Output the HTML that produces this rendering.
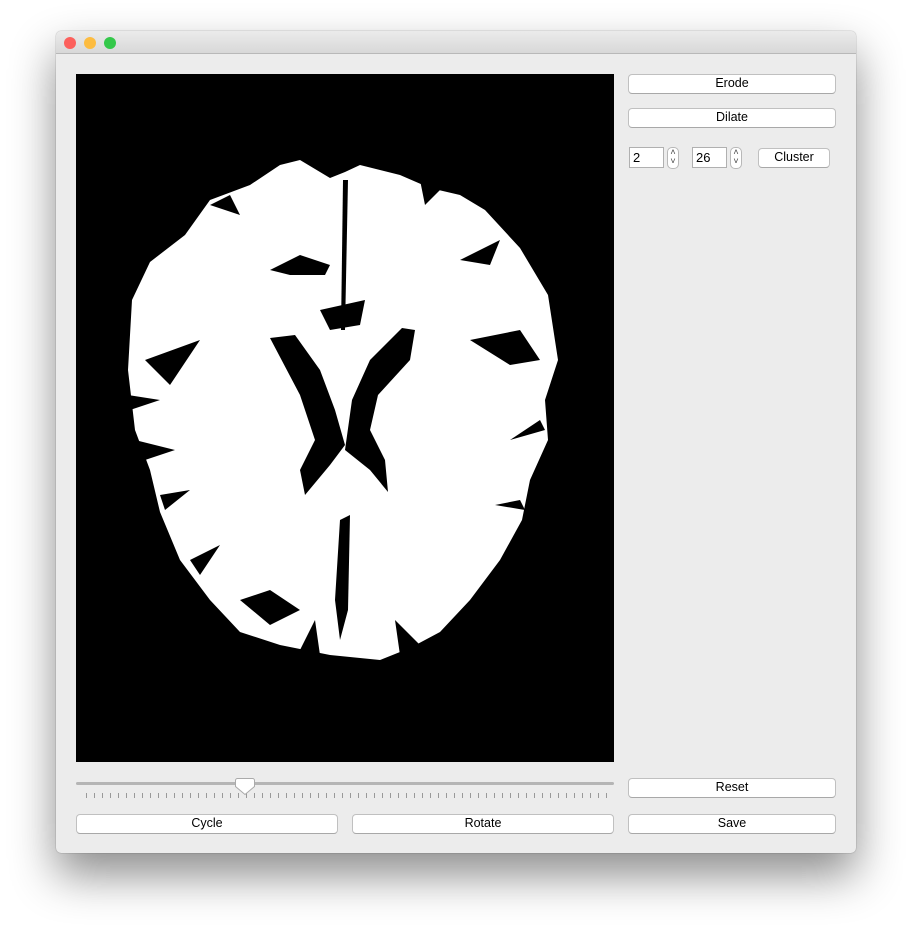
<!DOCTYPE html>
<html><head><style>
body{margin:0;width:912px;height:934px;background:#fff;font-family:"Liberation Sans",sans-serif;position:relative;overflow:hidden}
.win{position:absolute;left:56px;top:31px;width:800px;height:822px;background:#ececec;border-radius:5px;box-shadow:0 22px 45px rgba(0,0,0,.45),0 0 1px rgba(0,0,0,.5);overflow:hidden}
.tb{height:22px;background:linear-gradient(#ebebeb,#d8d8d8);border-bottom:1px solid #b8b8b8}
.dot{position:absolute;top:6px;width:12px;height:12px;border-radius:50%}
.btn{position:absolute;height:20px;background:#fff;border:1px solid #c0c0c0;border-bottom-color:#a8a8a8;border-radius:4px;font-size:12.5px;text-align:center;color:#000;box-sizing:border-box;line-height:16px}
.inp{position:absolute;height:21px;background:#fff;border:1px solid #b0b0b0;box-sizing:border-box;font-size:13px;padding-left:3px;line-height:19px}
.spin{position:absolute;width:12px;height:22px;background:#fff;border:1px solid #b8b8b8;border-radius:5px;box-sizing:border-box;font-size:9px;text-align:center;line-height:9px;color:#444}
</style></head><body>
<div class="win">
<div class="tb"></div>
<div class="dot" style="left:8px;background:#fc605c"></div>
<div class="dot" style="left:28px;background:#fdbc40"></div>
<div class="dot" style="left:48px;background:#34c84a"></div>
</div>
<svg style="position:absolute;left:76px;top:74px" width="538" height="688" viewBox="76 74 538 688">
<rect x="76" y="74" width="538" height="688" fill="#000"/>
<path fill="#fff" d="M280,165 L300,160 L330,178 L345,172 L360,165 L400,175 L430,188 L460,195 L485,210 L520,248 L548,295 L558,360 L545,400 L548,440 L530,480 L522,520 L500,560 L470,600 L440,632 L410,648 L380,660 L330,655 L280,645 L240,632 L210,600 L180,560 L160,512 L150,470 L135,430 L128,370 L132,300 L150,262 L185,235 L210,200 L250,185 Z"/>
<path fill="#000" d="M270,338 L295,335 L320,370 L335,410 L345,445 L330,465 L305,495 L300,470 L315,440 L300,395 Z"/>
<path fill="#000" d="M415,330 L402,328 L370,360 L352,400 L345,450 L370,470 L388,492 L385,460 L370,430 L378,395 L410,360 Z"/>
<path fill="#000" d="M343,180 L348,180 L345,330 L341,330 Z"/>
<path fill="#000" d="M340,520 L350,515 L348,610 L340,640 L335,600 Z"/>
<path fill="#000" d="M270,270 L300,255 L330,265 L325,275 L290,275 Z M470,340 L520,330 L540,360 L510,365 Z M145,360 L200,340 L170,385 Z M240,600 L270,590 L300,610 L270,625 Z M320,310 L365,300 L360,325 L330,330 Z M460,260 L500,240 L490,265 Z"/>
<path fill="#000" d="M128,395 L160,400 L130,410 Z M135,440 L175,450 L145,460 Z M160,495 L190,490 L165,510 Z M190,560 L220,545 L200,575 Z M300,650 L315,620 L320,655 Z M400,655 L395,620 L420,645 Z M540,420 L510,440 L545,430 Z M520,500 L495,505 L525,510 Z M230,195 L240,215 L210,205 Z M420,180 L425,205 L440,190 Z"/>
</svg>
<div class="btn" style="left:628px;top:74px;width:208px">Erode</div>
<div class="btn" style="left:628px;top:108px;width:208px">Dilate</div>
<div class="inp" style="left:629px;top:147px;width:35px">2</div>
<div class="spin" style="left:667px;top:147px">&#708;<br>&#709;</div>
<div class="inp" style="left:692px;top:147px;width:35px">26</div>
<div class="spin" style="left:730px;top:147px">&#708;<br>&#709;</div>
<div class="btn" style="left:758px;top:148px;width:72px">Cluster</div>
<div style="position:absolute;left:76px;top:782px;width:538px;height:3px;background:#b5b5b5;border-radius:2px"></div>
<svg style="position:absolute;left:76px;top:775px" width="538" height="25">
<g stroke="#999" stroke-width="1">
<path d="M10.5,18v5M18.5,18v5M26.5,18v5M34.5,18v5M42.5,18v5M50.5,18v5M58.5,18v5M66.5,18v5M74.5,18v5M82.5,18v5M90.5,18v5M98.5,18v5M106.5,18v5M114.5,18v5M122.5,18v5M130.5,18v5M138.5,18v5M146.5,18v5M154.5,18v5M162.5,18v5M170.5,18v5M178.5,18v5M186.5,18v5M194.5,18v5M202.5,18v5M210.5,18v5M218.5,18v5M226.5,18v5M234.5,18v5M242.5,18v5M250.5,18v5M258.5,18v5M266.5,18v5M274.5,18v5M282.5,18v5M290.5,18v5M298.5,18v5M306.5,18v5M314.5,18v5M322.5,18v5M330.5,18v5M338.5,18v5M346.5,18v5M354.5,18v5M362.5,18v5M370.5,18v5M378.5,18v5M386.5,18v5M394.5,18v5M402.5,18v5M410.5,18v5M418.5,18v5M426.5,18v5M434.5,18v5M442.5,18v5M450.5,18v5M458.5,18v5M466.5,18v5M474.5,18v5M482.5,18v5M490.5,18v5M498.5,18v5M506.5,18v5M514.5,18v5M522.5,18v5M530.5,18v5"/>
</g>
<path d="M161.5,3.5 h15 a2,2 0 0 1 2,2 v6 l-9.5,8 l-9.5,-8 v-6 a2,2 0 0 1 2,-2z" fill="#fff" stroke="#aaa"/>
</svg>
<div class="btn" style="left:628px;top:778px;width:208px">Reset</div>
<div class="btn" style="left:76px;top:814px;width:262px">Cycle</div>
<div class="btn" style="left:352px;top:814px;width:262px">Rotate</div>
<div class="btn" style="left:628px;top:814px;width:208px">Save</div>
</body></html>
